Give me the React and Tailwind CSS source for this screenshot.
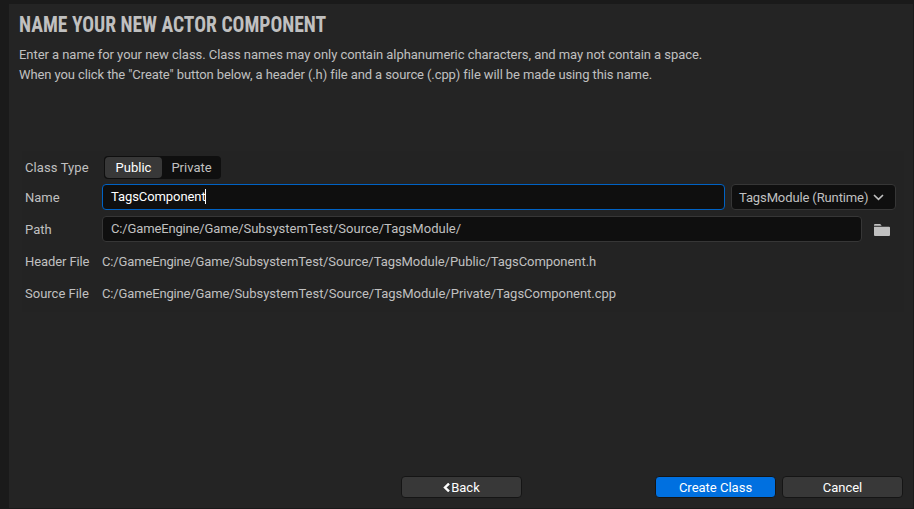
function Label({ children }) {
  return <div className="w-20 shrink-0 whitespace-nowrap">{children}</div>;
}

function FilePath({ children }) {
  return (
    <span className="whitespace-nowrap">
      <span className="tracking-[-0.15px]">C:/GameEngine/Game/</span>
      {children}
    </span>
  );
}

function Button({ primary, className = '', children }) {
  return (
    <button
      className={`flex h-[22px] w-[121px] items-center justify-center rounded border border-[#151515] pt-0.5 text-white ${
        primary ? 'bg-[#0070e0]' : 'bg-[#383838]'
      } ${className}`}
    >
      {children}
    </button>
  );
}

export default function App() {
  return (
    <div className="h-[509px] w-[914px] bg-[#1a1a1a] pt-1 pr-px pb-px pl-[9px] font-['Roboto',sans-serif] text-[13px] leading-5 text-[#c0c0c0]">
      <main className="flex h-full flex-col bg-[#242424]">
        <header className="h-[147px] pt-[9px] pl-[10px]">
          <h1 className="h-6 w-[420px] origin-left scale-x-[0.919] whitespace-nowrap text-[21.33px] leading-6 font-bold [font-stretch:75%]">
            NAME YOUR NEW ACTOR COMPONENT
          </h1>
          <p className="mt-[8px] whitespace-nowrap tracking-[-0.05px]">
            Enter a name for your new class. Class names may only contain alphanumeric characters, and may not contain a space.
          </p>
          <p className="whitespace-nowrap tracking-[-0.098px]">
            When you click the "Create" button below, a header (.h) file and a source (.cpp) file will be made using this name.
          </p>
        </header>

        <section className="ml-[13px] h-[161px] w-[882px] bg-[#232323] pt-[5px] pr-2 pl-[3px]">
          <div className="flex h-[23px] items-center">
            <Label><span className="tracking-[0.1px]">Class Type</span></Label>
            <div className="-ml-px flex h-[23px] w-[117px] rounded bg-[#0f0f0f] p-px">
              <div className="flex w-[57px] items-center justify-center rounded bg-[#383838] text-white">Public</div>
              <div className="flex flex-1 items-center justify-center pl-px">Private</div>
            </div>
          </div>
          <div className="mt-[5px] flex h-[26px] items-center">
            <Label><span className="relative top-px">Name</span></Label>
            <div className="-ml-[3px] flex h-[26px] w-[623px] items-center rounded border border-[#0062c4] bg-[#0f0f0f] pl-2 text-white">
              <span className="tracking-[-0.08px]">TagsComponent</span>
              <span className="-ml-px mb-0.5 h-[15px] w-px bg-white" />
            </div>
            <div className="ml-1.5 flex h-[26px] w-[165px] items-center rounded border border-[#363636] bg-[#0f0f0f] pl-[7px]">
              <span className="mt-px whitespace-nowrap tracking-[-0.12px]">TagsModule (Runtime)</span>
              <svg className="ml-[5px]" width="11" height="7" viewBox="0 0 11 7" fill="none" stroke="currentColor" strokeWidth="1.6">
                <path d="M1 1 5.5 5.3 10 1" />
              </svg>
            </div>
          </div>
          <div className="mt-1.5 flex h-[26px] items-center">
            <Label><span className="relative top-px">Path</span></Label>
            <div className="-ml-[3px] flex h-[26px] w-[760px] items-center rounded border border-[#363636] bg-[#0f0f0f] pl-2 tracking-[0.02px]">
              <FilePath>SubsystemTest/Source/TagsModule/</FilePath>
            </div>
            <svg className="mt-px ml-3" width="16" height="12" viewBox="0 0 16 12" fill="currentColor">
              <path d="M0 1Q0 0 1 0H6.2L7.7 1.7H0Z M0 2.8H15Q16 2.8 16 3.8V11Q16 12 15 12H1Q0 12 0 11Z" />
            </svg>
          </div>
          <div className="mt-[10px] flex h-5 items-center">
            <Label><span className="tracking-[-0.1px]">Header File</span></Label>
            <span className="-ml-[3px] tracking-[-0.05px]">
              <FilePath>SubsystemTest/Source/TagsModule/Public/TagsComponent.h</FilePath>
            </span>
          </div>
          <div className="mt-3 flex h-5 items-center">
            <Label>Source File</Label>
            <span className="-ml-[3px] tracking-[-0.025px]">
              <FilePath>SubsystemTest/Source/TagsModule/Private/TagsComponent.cpp</FilePath>
            </span>
          </div>
        </section>

        <footer className="mt-auto mb-[10px] flex pl-[392px]">
          <Button>
            <svg className="mb-px" width="8" height="9" viewBox="0 0 8 9" fill="none" stroke="currentColor" strokeWidth="2.4">
              <path d="M6 .6 2 4.5 6 8.4" />
            </svg>
            Back
          </Button>
          <Button primary className="ml-[133px]">Create Class</Button>
          <Button className="ml-1.5">Cancel</Button>
        </footer>
      </main>
    </div>
  );
}
